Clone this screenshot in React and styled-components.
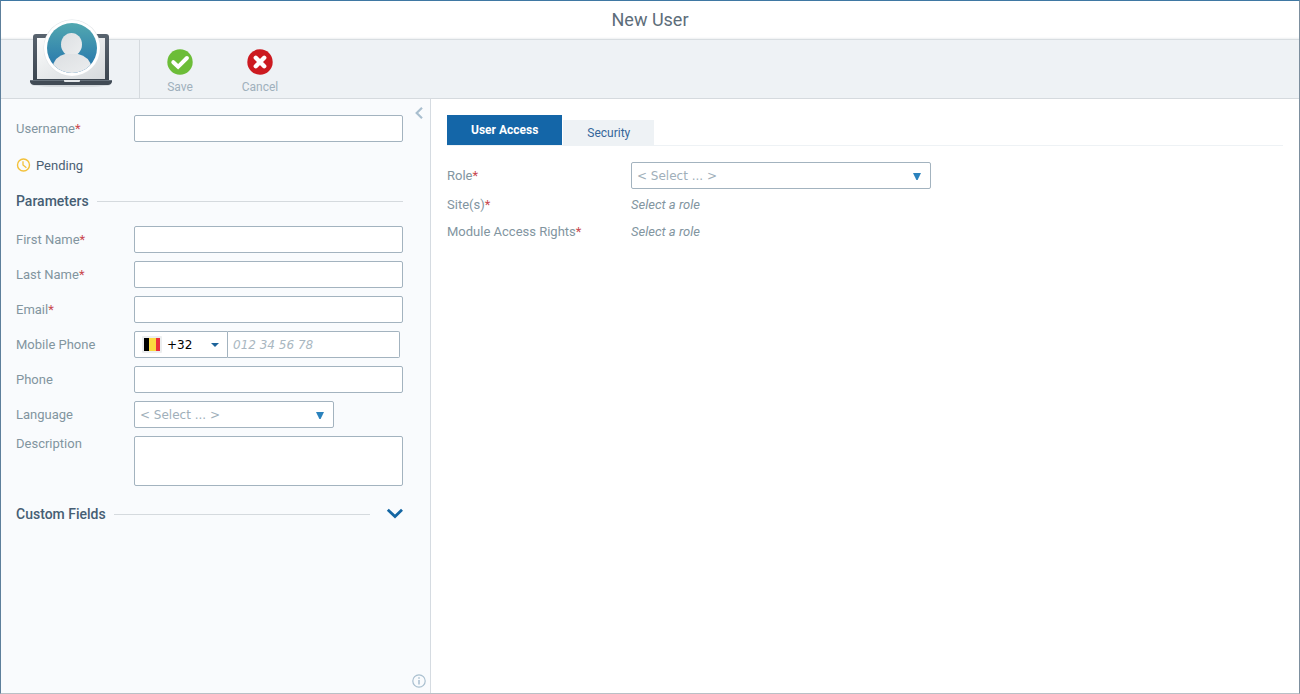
import React, { useState } from 'react';
import styled, { createGlobalStyle, css } from 'styled-components';

const GlobalStyle = createGlobalStyle`
  * {
    box-sizing: border-box;
  }

  body {
    margin: 0;
    background: #fff;
    font-family: Roboto, "Liberation Sans", sans-serif;
    font-size: 13px;
    color: #82959f;
  }

  button, input, select, textarea {
    font-family: inherit;
    margin: 0;
  }
`;

const Window = styled.div`
  display: flex;
  flex-direction: column;
  min-height: 100vh;
  border: 1px solid #7d8f9e;
  border-top-color: #3f78a3;
  border-left-color: #5d7f9b;
  border-bottom-color: #b9c0c6;
`;

const TitleBar = styled.header`
  display: flex;
  align-items: center;
  justify-content: center;
  height: 39px;
  border-bottom: 1px solid #d8dde1;
  box-shadow: inset 0 -2px 2px -1px #eef0f2;
`;

const Title = styled.h1`
  margin: 0;
  font-size: 18px;
  font-weight: 400;
  line-height: 24px;
  color: #5d6d7a;
`;

const Toolbar = styled.div`
  display: flex;
  height: 59px;
  background: #eef2f5;
  border-bottom: 1px solid #d5dade;
`;

const LogoCell = styled.div`
  position: relative;
  width: 139px;
  border-right: 1px solid #d5dade;
`;

const Logo = styled.svg`
  position: absolute;
  left: 27px;
  bottom: 8px;
  width: 86px;
  height: 72px;
`;

const ToolButton = styled.button`
  display: flex;
  flex-direction: column;
  align-items: center;
  gap: 4px;
  width: 80px;
  padding: 9px 0 0;
  border: 0;
  background: none;
  font-size: 12px;
  line-height: 16px;
  color: #9fb0bc;
  cursor: pointer;
`;

const Body = styled.div`
  display: flex;
  flex: 1;
`;

const SidePanel = styled.aside`
  position: relative;
  flex: none;
  width: 430px;
  padding: 16px 27px 16px 15px;
  background: #f9fbfd;
  border-right: 1px solid #d5dbe1;
`;

const CornerButton = styled.button`
  position: absolute;
  right: 4px;
  ${({ $place }) => ($place === 'top' ? 'top: 7px;' : 'bottom: 5px;')}
  display: flex;
  padding: 0;
  border: 0;
  background: none;
  color: #a9bfcf;
  cursor: pointer;
`;

const Fields = styled.div`
  display: flex;
  flex-direction: column;
  gap: 8px;
`;

const Row = styled.div`
  display: flex;
  align-items: ${({ $top }) => ($top ? 'flex-start' : 'center')};
  min-height: 27px;
`;

const Label = styled.label`
  flex: none;
  width: ${({ $wide }) => ($wide ? '184px' : '118px')};
  line-height: 16px;
`;

const Required = styled.span`
  color: #c9484e;
`;

const boxStyle = css`
  height: 27px;
  border: 1px solid #a3b3bf;
  border-radius: 2px;
  background: #fff;
  font-family: "DejaVu Sans", Verdana, sans-serif;
  font-size: 12px;
  outline: none;

  &:focus {
    border-color: #1466a8;
  }
`;

const TextInput = styled.input`
  ${boxStyle}
  flex: 1;
  min-width: 0;
  padding: 0 5px;
  color: #000;

  &::placeholder {
    color: #a9b7c1;
    font-style: italic;
    opacity: 1;
  }
`;

const TextArea = styled.textarea`
  ${boxStyle}
  flex: 1;
  height: 50px;
  padding: 4px 5px;
  resize: none;
`;

const PhoneGroup = styled.div`
  display: flex;
  flex: 1;
  margin-right: 3px;

  ${TextInput} {
    border-left: 0;
    border-radius: 0 2px 2px 0;
  }
`;

const SelectWrap = styled.div`
  position: relative;
  display: flex;
  width: ${({ $width }) => $width};
`;

const Select = styled.select`
  ${boxStyle}
  appearance: none;
  width: 100%;
  padding: 0 24px 0 5px;
  color: #a0afba;
`;

const CountrySelect = styled(Select)`
  padding-left: 32px;
  border-radius: 2px 0 0 2px;
  color: #000;
`;

const Arrow = styled.svg`
  position: absolute;
  right: 8px;
  top: 10px;
  pointer-events: none;
`;

const Flag = styled.svg`
  position: absolute;
  left: 8px;
  top: 5px;
  pointer-events: none;
`;

const Status = styled.div`
  display: flex;
  align-items: center;
  gap: 5px;
  height: 20px;
  margin: 13px 0 16px;
  color: #4b6073;
`;

const SectionHead = styled.div`
  display: flex;
  align-items: center;
  gap: 8px;
  height: 20px;
  margin: ${({ $margin }) => $margin};
`;

const SectionTitle = styled.h2`
  margin: 0;
  font-size: 14px;
  font-weight: 500;
  line-height: 20px;
  color: #465e74;
`;

const Rule = styled.div`
  flex: 1;
  height: 1px;
  background: #d5dade;
`;

const ExpandButton = styled.button`
  display: flex;
  padding: 0;
  margin-left: 8px;
  border: 0;
  background: none;
  cursor: pointer;
`;

const Content = styled.main`
  flex: 1;
  min-width: 0;
  padding: 16px;
`;

const Tabs = styled.div`
  display: flex;
  align-items: flex-end;
  gap: 1px;
  height: 31px;
  margin-bottom: 16px;
  border-bottom: 1px solid #eef2f5;
`;

const Tab = styled.button`
  height: ${({ $active }) => ($active ? '30px' : '25px')};
  padding: 0 24px;
  border: 0;
  background: ${({ $active }) => ($active ? '#1466a8' : '#eef2f5')};
  color: ${({ $active }) => ($active ? '#fff' : '#35669a')};
  font-size: 12px;
  font-weight: ${({ $active }) => ($active ? 700 : 400)};
  cursor: pointer;
`;

const RoleRow = styled(Row)`
  margin-bottom: 2px;
`;

const Hint = styled.em`
  line-height: 16px;
`;

const FieldLabel = ({ children, required, ...rest }) => (
  <Label {...rest}>
    {children}
    {required && <Required>*</Required>}
  </Label>
);

const TextField = ({ id, label, required }) => (
  <Row>
    <FieldLabel htmlFor={id} required={required}>{label}</FieldLabel>
    <TextInput id={id} type="text" />
  </Row>
);

const Dropdown = ({ id, width }) => (
  <SelectWrap $width={width}>
    <Select id={id}>
      <option>{'< Select ... >'}</option>
    </Select>
    <Arrow width="10" height="9" viewBox="0 0 10 9">
      <path d="M0 1h8L4.6 8H3.4z" fill="#2b82bd" />
    </Arrow>
  </SelectWrap>
);

const UserLogo = () => (
  <Logo viewBox="0 0 86 72" aria-hidden="true">
    <defs>
      <linearGradient id="avatar" x1="0" y1="0" x2="0" y2="1">
        <stop offset="0" stopColor="#52a8b0" />
        <stop offset="1" stopColor="#2271ac" />
      </linearGradient>
      <linearGradient id="frame" x1="0" y1="0" x2="0" y2="1">
        <stop offset="0" stopColor="#59646f" />
        <stop offset="1" stopColor="#3b454f" />
      </linearGradient>
      <linearGradient id="screen" x1="0" y1="0" x2="1" y2="1">
        <stop offset="0" stopColor="#fafbfb" />
        <stop offset="1" stopColor="#d6dadd" />
      </linearGradient>
      <linearGradient id="person" x1="0" y1="0" x2="1" y2="1">
        <stop offset="0" stopColor="#dcdfe2" />
        <stop offset="1" stopColor="#eceeef" />
      </linearGradient>
      <clipPath id="disc">
        <circle cx="44" cy="30" r="25" />
      </clipPath>
    </defs>
    <ellipse cx="43" cy="67" rx="39" ry="2" fill="#d3d8dc" />
    <path d="M5 63V19q0-3 3-3h70q3 0 3 3v44z" fill="url(#frame)" />
    <path d="M9 20h68v41H9z" fill="url(#screen)" />
    <path d="M2 62h82v2q-1 3-4 3H6q-3 0-4-3z" fill="#414b55" />
    <path d="M2 62h82v1H2z" fill="#66717b" />
    <path d="M36 62h16v1q0 1-1 1H37q-1 0-1-1z" fill="#e3e7ea" />
    <circle cx="44" cy="30" r="28.5" fill="#dfe3e6" />
    <circle cx="44" cy="30" r="28" fill="#fff" />
    <circle cx="44" cy="30" r="25" fill="url(#avatar)" />
    <g clipPath="url(#disc)" fill="url(#person)">
      <ellipse cx="43.5" cy="26.5" rx="10.5" ry="11.5" />
      <path d="M24 56V50q3-12 13-14h13q11 2 14 14v6z" />
    </g>
  </Logo>
);

const App = () => {
  const [tab, setTab] = useState('access');

  return (
    <>
      <GlobalStyle />
      <Window>
        <TitleBar>
          <Title>New User</Title>
        </TitleBar>

        <Toolbar>
          <LogoCell>
            <UserLogo />
          </LogoCell>
          <ToolButton type="button">
            <svg width="26" height="26" viewBox="0 0 26 26">
              <circle cx="13" cy="13" r="12.7" fill="#6cbd38" />
              <path d="M6.3 13.2l4.8 4.6 8.8-8.8" fill="none" stroke="#fff" strokeWidth="4" strokeLinecap="round" />
            </svg>
            Save
          </ToolButton>
          <ToolButton type="button">
            <svg width="26" height="26" viewBox="0 0 26 26">
              <circle cx="13" cy="13" r="12.7" fill="#cc1a20" />
              <path d="M8.8 8.8l8.4 8.4M17.2 8.8l-8.4 8.4" stroke="#fff" strokeWidth="4.4" strokeLinecap="round" />
            </svg>
            Cancel
          </ToolButton>
        </Toolbar>

        <Body>
          <SidePanel>
            <CornerButton type="button" $place="top" aria-label="Collapse panel">
              <svg width="14" height="14" viewBox="0 0 14 14">
                <path d="M10 1.8L4.7 7l5.3 5.2" fill="none" stroke="currentColor" strokeWidth="2.2" />
              </svg>
            </CornerButton>

            <TextField id="username" label="Username" required />

            <Status>
              <svg width="15" height="15" viewBox="0 0 15 15">
                <circle cx="7.5" cy="7" r="6" fill="none" stroke="#f3c13a" strokeWidth="1.4" />
                <path d="M7 3.2V7l3.4 2.8" fill="none" stroke="#f3c13a" strokeWidth="1.3" />
              </svg>
              Pending
            </Status>

            <SectionHead $margin="0 0 15px">
              <SectionTitle>Parameters</SectionTitle>
              <Rule />
            </SectionHead>

            <Fields>
              <TextField id="firstName" label="First Name" required />
              <TextField id="lastName" label="Last Name" required />
              <TextField id="email" label="Email" required />
              <Row>
                <FieldLabel htmlFor="mobile">Mobile Phone</FieldLabel>
                <PhoneGroup>
                  <SelectWrap $width="94px">
                    <CountrySelect aria-label="Country code">
                      <option>+32</option>
                    </CountrySelect>
                    <Flag width="20" height="17" viewBox="0 0 20 17">
                      <rect width="20" height="17" rx="1" fill="#eceeef" />
                      <path d="M2 2h5v13H2z" fill="#000" />
                      <path d="M7 2h7v13H7z" fill="#fbd93f" />
                      <path d="M14 2h4v13h-4z" fill="#ea2f3c" />
                    </Flag>
                    <Arrow width="10" height="8" viewBox="0 0 10 8">
                      <path d="M1 2h8L5 6z" fill="#1c639a" />
                    </Arrow>
                  </SelectWrap>
                  <TextInput id="mobile" type="tel" placeholder="012 34 56 78" />
                </PhoneGroup>
              </Row>
              <TextField id="phone" label="Phone" />
              <Row>
                <FieldLabel htmlFor="language">Language</FieldLabel>
                <Dropdown id="language" width="200px" />
              </Row>
              <Row $top>
                <FieldLabel htmlFor="description">Description</FieldLabel>
                <TextArea id="description" />
              </Row>
            </Fields>

            <SectionHead $margin="18px 0 0">
              <SectionTitle>Custom Fields</SectionTitle>
              <Rule />
              <ExpandButton type="button" aria-label="Expand custom fields">
                <svg width="17" height="12" viewBox="0 0 17 12">
                  <path d="M1.8 1.8L9 8.5l7-6.7" fill="none" stroke="#1466a3" strokeWidth="2.8" />
                </svg>
              </ExpandButton>
            </SectionHead>

            <CornerButton type="button" $place="bottom" aria-label="Information">
              <svg width="14" height="14" viewBox="0 0 14 14">
                <circle cx="7" cy="7" r="6.2" fill="none" stroke="currentColor" strokeWidth="1.2" />
                <path d="M7 3.2v1.6M7 6v4.6" stroke="currentColor" strokeWidth="1.5" />
              </svg>
            </CornerButton>
          </SidePanel>

          <Content>
            <Tabs role="tablist">
              <Tab
                type="button"
                role="tab"
                aria-selected={tab === 'access'}
                $active={tab === 'access'}
                onClick={() => setTab('access')}
              >
                User Access
              </Tab>
              <Tab
                type="button"
                role="tab"
                aria-selected={tab === 'security'}
                $active={tab === 'security'}
                onClick={() => setTab('security')}
              >
                Security
              </Tab>
            </Tabs>

            {tab === 'access' && (
              <>
                <RoleRow>
                  <FieldLabel htmlFor="role" $wide required>Role</FieldLabel>
                  <Dropdown id="role" width="300px" />
                </RoleRow>
                <Row>
                  <FieldLabel as="span" $wide required>Site(s)</FieldLabel>
                  <Hint>Select a role</Hint>
                </Row>
                <Row>
                  <FieldLabel as="span" $wide required>Module Access Rights</FieldLabel>
                  <Hint>Select a role</Hint>
                </Row>
              </>
            )}
          </Content>
        </Body>
      </Window>
    </>
  );
};

export default App;
